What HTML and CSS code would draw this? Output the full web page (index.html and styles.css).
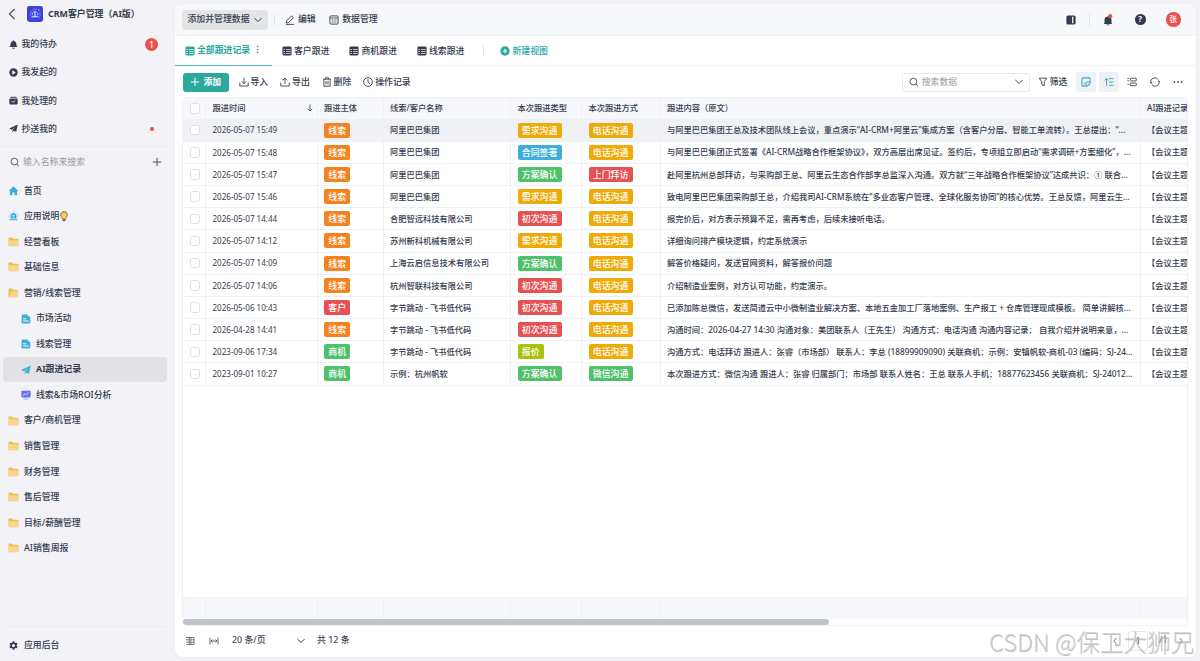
FILE: index.html
```html
<!DOCTYPE html>
<html lang="zh-CN">
<head>
    <meta charset="UTF-8">
    <meta name="viewport" content="width=device-width, initial-scale=1.0">
    <title>CRM客户管理（AI版）</title>
    <link rel="stylesheet" href="styles.css">
</head>
<body>
    <!-- shared icons -->
    <svg class="sprite">
        <symbol id="folder" viewBox="0 0 12 11"><path d="M.5 1.8Q.5.6 1.7.6H4.3L5.5 1.8H10.2Q11.4 1.8 11.4 3V9Q11.4 10.2 10.2 10.2H1.7Q.5 10.2.5 9Z" fill="#efbd50"/><path d="M.9 3.6H11V9Q11 9.9 10.1 9.9H1.8Q.9 9.9.9 9Z" fill="#f8d689"/></symbol>
        <symbol id="folder-open" viewBox="0 0 12 11"><path d="M.5 1.8Q.5.6 1.7.6H4.3L5.5 1.8H9.6Q10.6 1.8 10.6 3V9.5L1.5 10.2Q.5 10 .5 9Z" fill="#efbd50"/><path d="M3 3.8H11.6L10 9.4Q9.8 10.2 9 10.2H1.3Z" fill="#f8d689"/></symbol>
        <symbol id="doc" viewBox="0 0 10 10"><path d="M.6 1.8Q.6.5 1.8.5H6L9.3 3.6V8.3Q9.3 9.5 8.1 9.5H1.8Q.6 9.5.6 8.3Z" fill="#3dafd4"/><path d="M2.2 4.7H5M2.2 7H7.7" stroke="#fff" stroke-width="1.1"/></symbol>
        <symbol id="plane" viewBox="0 0 10 10"><path d="M9.7.5.2 5 3 6.3 7.5 2.9 3.8 6.7V9.5L5.3 7.5 8 8.7Z" fill="currentColor"/></symbol>
        <symbol id="table" viewBox="0 0 10 10"><rect x=".4" y=".6" width="9.2" height="8.8" rx="1.3" fill="currentColor"/><path d="M1.3 3.5H3M4 3.5H8.7M1.3 5.5H3M4 5.5H8.7M1.3 7.5H3M4 7.5H8.7" stroke="#fff" stroke-width=".75" opacity=".9"/></symbol>
        <symbol id="down" viewBox="0 0 10 6"><path d="M1.4 1 5 4.6 8.6 1" fill="none" stroke="currentColor" stroke-width="1"/></symbol>
        <symbol id="search" viewBox="0 0 10 10"><circle cx="4.4" cy="4.6" r="3.4" fill="none" stroke="currentColor" stroke-width=".9"/><path d="M6.9 7.1 9 9.2" stroke="currentColor" stroke-width=".9"/></symbol>
        <symbol id="plus" viewBox="0 0 10 10"><path d="M5 .8V9.2M.8 5H9.2" stroke="currentColor" stroke-width="1"/></symbol>
    </svg>

    <aside class="sidebar">
        <div class="app-title">
            <svg class="back" viewBox="0 0 8 12"><path d="M6.6 1 1.4 6 6.6 11" fill="none" stroke="#424957" stroke-width="1.1"/></svg>
            <svg class="logo" viewBox="0 0 16 16"><rect width="16" height="16" rx="2.4" fill="#3f41dd"/><path d="M5.2 12A5.2 5.2 0 0 1 10.2 3.2M12.8 6.2A5.2 5.2 0 0 1 11 12.2" fill="none" stroke="#7f8fff" stroke-width=".8"/><path d="M6 9.5A2.6 2.6 0 1 1 10.2 9.5" fill="none" stroke="#a9c8ff" stroke-width=".9"/><path d="M8 6V11M5.2 10.8H11" stroke="#d5f3ff" stroke-width="1.1"/><circle cx="11.8" cy="4" r=".8" fill="#c3b5ff"/></svg>
            <h1>CRM客户管理（AI版）</h1>
        </div>
        <nav class="tasks">
            <a class="task"><svg class="task-icon" viewBox="0 0 10 10"><path d="M5 .2Q5.7.2 5.7 1 8.3 1.8 8.3 4.5V6.2L9.6 7.9H.4L1.7 6.2V4.5Q1.7 1.8 4.3 1 4.3.2 5 .2ZM3.5 8.5H6.5Q6 9.8 5 9.8T3.5 8.5Z" fill="currentColor"/></svg>我的待办<span class="badge">1</span></a>
            <a class="task"><svg class="task-icon" viewBox="0 0 10 10"><circle cx="5" cy="5" r="4.7" fill="currentColor"/><path d="M3.7 2.6 7.4 5 3.7 7.4Z" fill="#fff"/></svg>我发起的</a>
            <a class="task"><svg class="task-icon" viewBox="0 0 10 10"><path d="M1.6.8H8.4V2H1.6ZM1 2.7H9Q9.6 2.7 9.6 3.4V8.4Q9.6 9.4 8.6 9.4H1.4Q.4 9.4.4 8.4V3.4Q.4 2.7 1 2.7Z" fill="currentColor"/><path d="M3.1 5.6 4.6 7.1 7 4.7" fill="none" stroke="#fff" stroke-width=".9"/></svg>我处理的</a>
            <a class="task"><svg class="task-icon"><use href="#plane"/></svg>抄送我的<span class="dot"></span></a>
        </nav>
        <div class="side-search">
            <svg class="icon"><use href="#search"/></svg>
            <span>输入名称来搜索</span>
            <svg class="icon"><use href="#plus"/></svg>
        </div>
        <nav class="menu">
            <a class="item"><svg viewBox="0 0 12 11"><path d="M6 .6 11.2 5.1H9.9V10.2H7.2V7.2H4.8V10.2H2.1V5.1H.8Z" fill="#3dafd4"/></svg>首页</a>
            <a class="item"><svg viewBox="0 0 12 11"><path d="M2.8 8.3V5Q2.8 2.2 6 2.2T9.2 5V8.3ZM1.5 9H10.5V10.3H1.5Z" fill="#3dafd4"/><path d="M6 .2V1.3M1.5 2 2.5 2.9M10.5 2 9.5 2.9M.5 5.5H1.8M10.2 5.5H11.5" stroke="#3dafd4" stroke-width=".7"/><path d="M6 4.3V7M5 5.2H7" stroke="#fff" stroke-width=".8"/></svg>应用说明<svg class="bulb" viewBox="0 0 8 11"><path d="M4 .5A3.4 3.4 0 0 1 6 6.6L5.5 8H2.5L2 6.6A3.4 3.4 0 0 1 4 .5Z" fill="#ffc545" stroke="#6b4a32" stroke-width=".7"/><path d="M2.5 8.3H5.5V9.6L4 10.6 2.5 9.6Z" fill="#555b66"/><path d="M3.3 4.5V7.5M4.7 4.5V7.5" stroke="#fff1a8" stroke-width=".6"/></svg></a>
            <a class="item"><svg><use href="#folder"/></svg>经营看板</a>
            <a class="item"><svg><use href="#folder"/></svg>基础信息</a>
            <a class="item"><svg><use href="#folder-open"/></svg>营销/线索管理</a>
            <a class="item sub"><svg><use href="#doc"/></svg>市场活动</a>
            <a class="item sub"><svg><use href="#doc"/></svg>线索管理</a>
            <a class="item sub active"><svg><use href="#plane"/></svg>AI跟进记录</a>
            <a class="item sub"><svg viewBox="0 0 10 10"><rect x=".4" y=".7" width="9.2" height="6.7" rx=".8" fill="#6673ea"/><path d="M2.2 5.4 4.2 3.7 5.4 4.7 7.6 2.5" fill="none" stroke="#fff" stroke-width=".8"/><path d="M5 7.4V9M2.5 9.1H7.5" stroke="#78c8e8" stroke-width=".9"/></svg>线索&amp;市场ROI分析</a>
            <a class="item"><svg><use href="#folder"/></svg>客户/商机管理</a>
            <a class="item"><svg><use href="#folder"/></svg>销售管理</a>
            <a class="item"><svg><use href="#folder"/></svg>财务管理</a>
            <a class="item"><svg><use href="#folder"/></svg>售后管理</a>
            <a class="item"><svg><use href="#folder"/></svg>目标/薪酬管理</a>
            <a class="item"><svg><use href="#folder"/></svg>AI销售周报</a>
        </nav>
        <a class="backend"><svg viewBox="0 0 10 10"><path d="M4.1.4H5.9L6.2 1.7 7.3 2.3 8.6 1.9 9.5 3.5 8.5 4.4V5.6L9.5 6.5 8.6 8.1 7.3 7.7 6.2 8.3 5.9 9.6H4.1L3.8 8.3 2.7 7.7 1.4 8.1.5 6.5 1.5 5.6V4.4L.5 3.5 1.4 1.9 2.7 2.3 3.8 1.7ZM5 3.3A1.7 1.7 0 1 0 5 6.7 1.7 1.7 0 1 0 5 3.3Z" fill="currentColor" fill-rule="evenodd"/></svg>应用后台</a>
    </aside>

    <main class="panel">
        <header class="topbar">
            <button class="mode">添加并管理数据<svg class="chev"><use href="#down"/></svg></button>
            <span class="sep"></span>
            <a class="top-link edit"><svg class="icon" viewBox="0 0 10 10"><path d="M1.2 8 1.7 5.8 6.5.9 8.4 2.7 3.6 7.6ZM1 9.4H9" fill="none" stroke="currentColor" stroke-width=".9"/></svg>编辑</a>
            <a class="top-link"><svg class="icon" viewBox="0 0 10 10"><rect x=".9" y=".9" width="8.2" height="8.2" rx="1" fill="none" stroke="currentColor" stroke-width=".9"/><path d="M1 3H9M2.7 5H4M4.5 5H5.7M6.2 5H7.5M2.7 7H4M4.5 7H5.7M6.2 7H7.5" stroke="currentColor" stroke-width=".8"/></svg>数据管理</a>
            <div class="top-right">
                <svg class="icon" viewBox="0 0 10 10"><rect x=".4" y=".5" width="9.2" height="9" rx="1.5" fill="#343b4b"/><path d="M6.7 1.8V8.2" stroke="#f7f8fa" stroke-width="1.3"/></svg>
                <span class="sep"></span>
                <svg class="bell" viewBox="0 0 10 12"><path d="M1.5 9V6Q1.5 2.6 5 2.4 8.5 2.6 8.5 6V9L9.2 10H.8ZM3.5 10.5H6.5V11.3H3.5Z" fill="#343b4b"/><circle cx="7.2" cy="2.2" r="2.1" fill="#ea4b4b"/></svg>
                <span class="help">?</span>
                <span class="avatar">张</span>
            </div>
        </header>

        <div class="tabs">
            <a class="tab current"><svg class="icon"><use href="#table"/></svg>全部跟进记录<i class="more">⋮</i></a>
            <a class="tab"><svg class="icon"><use href="#table"/></svg>客户跟进</a>
            <a class="tab"><svg class="icon"><use href="#table"/></svg>商机跟进</a>
            <a class="tab"><svg class="icon"><use href="#table"/></svg>线索跟进</a>
            <span class="sep"></span>
            <a class="new-view"><svg class="icon" viewBox="0 0 10 10"><circle cx="5" cy="5" r="4.7" fill="#2ba99d"/><path d="M5 2.8V7.2M2.8 5H7.2" stroke="#fff"/></svg>新建视图</a>
        </div>

        <div class="toolbar">
            <button class="add"><svg class="icon"><use href="#plus"/></svg>添加</button>
            <a class="tool"><svg class="icon" viewBox="0 0 10 10"><path d="M5 .8V6.5M2.7 4.4 5 6.7 7.3 4.4M.8 5.6V9H9.2V5.6" fill="none" stroke="currentColor" stroke-width=".9"/></svg>导入</a>
            <a class="tool"><svg class="icon" viewBox="0 0 10 10"><path d="M5 7V1.2M2.7 3.4 5 1.1 7.3 3.4M.8 5.6V9H9.2V5.6" fill="none" stroke="currentColor" stroke-width=".9"/></svg>导出</a>
            <a class="tool"><svg class="icon" viewBox="0 0 10 10"><path d="M1 2.2H9M3.5 2V.8H6.5V2M1.9 2.2V9.2H8.1V2.2M4 4V7.4M6 4V7.4" fill="none" stroke="currentColor" stroke-width=".9"/></svg>删除</a>
            <a class="tool"><svg class="icon" viewBox="0 0 10 10"><circle cx="5" cy="5" r="4.4" fill="none" stroke="currentColor" stroke-width=".9"/><path d="M5 2.3V5.3L7 6.6" fill="none" stroke="currentColor" stroke-width=".9"/></svg>操作记录</a>
            <div class="search-box"><svg class="icon"><use href="#search"/></svg><span>搜索数据</span><svg class="chev"><use href="#down"/></svg></div>
            <a class="filter"><svg class="icon" viewBox="0 0 10 10"><path d="M1.2 1.2H8.8L6.2 4.8V8.8L3.8 7.7V4.8Z" fill="none" stroke="currentColor" stroke-width=".9"/></svg>筛选</a>
            <a class="square on"><svg class="icon" viewBox="0 0 10 10"><path d="M9.1 5V1.9Q9.1.9 8.1.9H1.9Q.9.9.9 1.9V8.1Q.9 9.1 1.9 9.1H5Q8.8 8.8 9.1 5H6Q5 5 5 6V9M2.8 6.4H3.8" fill="none" stroke="currentColor" stroke-width="1.1"/></svg></a>
            <a class="square on"><svg class="icon" viewBox="0 0 10 10"><path d="M2.5 9V1.7M.6 3.5 2.5 1.5 4.4 3.5M4.8 1.7H9.5M5 5H9.5M5 8.4H9.5" fill="none" stroke="currentColor" stroke-width="1"/></svg></a>
            <a class="square"><svg class="icon" viewBox="0 0 10 10"><path d="M.5 1.5H1.8M.5 3.8H1.8M.5 7.3H1.8" stroke="currentColor"/><rect x="3.3" y="1.2" width="6" height="2.7" rx=".4" fill="none" stroke="currentColor" stroke-width=".9"/><rect x="3.3" y="6" width="6" height="2.7" rx=".4" fill="none" stroke="currentColor" stroke-width=".9"/></svg></a>
            <a class="square"><svg class="icon" viewBox="0 0 10 10"><path d="M1 5.8A4 4 0 0 1 8.4 2.9M9 4.2A4 4 0 0 1 1.6 7.1M.2 5 1 6.2 2.2 5.5M9.8 5 9 3.8 7.8 4.5" fill="none" stroke="currentColor" stroke-width=".9"/></svg></a>
            <a class="square last"><svg class="icon" viewBox="0 0 10 10"><circle cx="1.5" cy="5" r=".8"/><circle cx="5" cy="5" r=".8"/><circle cx="8.5" cy="5" r=".8"/></svg></a>
        </div>

        <section class="grid">
            <div class="row head"><div><i class="check"></i></div><div>跟进时间<svg class="sort" viewBox="0 0 6 8"><path d="M3 .5V7M.8 4.8 3 7 5.2 4.8" fill="none" stroke="currentColor" stroke-width=".8"/></svg></div><div>跟进主体</div><div>线索/客户名称</div><div>本次跟进类型</div><div>本次跟进方式</div><div>跟进内容（原文）</div><div>AI跟进记录</div></div>
            <div class="row hover"><div><i class="check"></i></div><div class="date">2026-05-07 15:49</div><div><b class="tag orange">线索</b></div><div>阿里巴巴集团</div><div><b class="tag yellow">需求沟通</b></div><div><b class="tag yellow">电话沟通</b></div><div><p>与阿里巴巴集团王总及技术团队线上会议，重点演示“AI-CRM+阿里云”集成方案（含客户分层、智能工单流转）。王总提出：“...</p></div><div>【会议主题</div></div>
            <div class="row"><div><i class="check"></i></div><div class="date">2026-05-07 15:48</div><div><b class="tag orange">线索</b></div><div>阿里巴巴集团</div><div><b class="tag blue">合同签署</b></div><div><b class="tag yellow">电话沟通</b></div><div><p>与阿里巴巴集团正式签署《AI-CRM战略合作框架协议》，双方高层出席见证。签约后，专项组立即启动“需求调研+方案细化”，...</p></div><div>【会议主题</div></div>
            <div class="row"><div><i class="check"></i></div><div class="date">2026-05-07 15:47</div><div><b class="tag orange">线索</b></div><div>阿里巴巴集团</div><div><b class="tag green">方案确认</b></div><div><b class="tag red">上门拜访</b></div><div><p>赴阿里杭州总部拜访，与采购部王总、阿里云生态合作部李总监深入沟通。双方就“三年战略合作框架协议”达成共识：① 联合...</p></div><div>【会议主题</div></div>
            <div class="row"><div><i class="check"></i></div><div class="date">2026-05-07 15:46</div><div><b class="tag orange">线索</b></div><div>阿里巴巴集团</div><div><b class="tag yellow">需求沟通</b></div><div><b class="tag yellow">电话沟通</b></div><div><p>致电阿里巴巴集团采购部王总，介绍我司AI-CRM系统在“多业态客户管理、全球化服务协同”的核心优势。王总反馈，阿里云生...</p></div><div>【会议主题</div></div>
            <div class="row"><div><i class="check"></i></div><div class="date">2026-05-07 14:44</div><div><b class="tag orange">线索</b></div><div>合肥智远科技有限公司</div><div><b class="tag red">初次沟通</b></div><div><b class="tag yellow">电话沟通</b></div><div><p>报完价后，对方表示预算不足，需再考虑，后续未接听电话。</p></div><div>【会议主题</div></div>
            <div class="row"><div><i class="check"></i></div><div class="date">2026-05-07 14:12</div><div><b class="tag orange">线索</b></div><div>苏州新科机械有限公司</div><div><b class="tag yellow">需求沟通</b></div><div><b class="tag yellow">电话沟通</b></div><div><p>详细询问排产模块逻辑，约定系统演示</p></div><div>【会议主题</div></div>
            <div class="row"><div><i class="check"></i></div><div class="date">2026-05-07 14:09</div><div><b class="tag orange">线索</b></div><div>上海云启信息技术有限公司</div><div><b class="tag green">方案确认</b></div><div><b class="tag yellow">电话沟通</b></div><div><p>解答价格疑问，发送官网资料，解答报价问题</p></div><div>【会议主题</div></div>
            <div class="row"><div><i class="check"></i></div><div class="date">2026-05-07 14:06</div><div><b class="tag orange">线索</b></div><div>杭州智联科技有限公司</div><div><b class="tag red">初次沟通</b></div><div><b class="tag yellow">电话沟通</b></div><div><p>介绍制造业案例，对方认可功能，约定演示。</p></div><div>【会议主题</div></div>
            <div class="row"><div><i class="check"></i></div><div class="date">2026-05-06 10:43</div><div><b class="tag red">客户</b></div><div>字节跳动 - 飞书低代码</div><div><b class="tag red">初次沟通</b></div><div><b class="tag yellow">电话沟通</b></div><div><p>已添加陈总微信，发送简道云中小微制造业解决方案、本地五金加工厂落地案例、生产报工 + 仓库管理现成模板。 简单讲解核...</p></div><div>【会议主题</div></div>
            <div class="row"><div><i class="check"></i></div><div class="date">2026-04-28 14:41</div><div><b class="tag orange">线索</b></div><div>字节跳动 - 飞书低代码</div><div><b class="tag red">初次沟通</b></div><div><b class="tag yellow">电话沟通</b></div><div><p>沟通时间：2026-04-27 14:30 沟通对象：美团联系人（王先生） 沟通方式：电话沟通 沟通内容记录： 自我介绍并说明来意，...</p></div><div>【会议主题</div></div>
            <div class="row"><div><i class="check"></i></div><div class="date">2023-09-06 17:34</div><div><b class="tag green">商机</b></div><div>字节跳动 - 飞书低代码</div><div><b class="tag lime">报价</b></div><div><b class="tag yellow">电话沟通</b></div><div><p>沟通方式：电话拜访 跟进人：张睿（市场部） 联系人：李总 (18899909090) 关联商机：示例：安镇帆软-商机-03 (编码：SJ-24...</p></div><div>【会议主题</div></div>
            <div class="row"><div><i class="check"></i></div><div class="date">2023-09-01 10:27</div><div><b class="tag green">商机</b></div><div>示例：杭州帆软</div><div><b class="tag green">方案确认</b></div><div><b class="tag green">微信沟通</b></div><div><p>本次跟进方式：微信沟通 跟进人：张睿 归属部门：市场部 联系人姓名：王总 联系人手机：18877623456 关联商机：SJ-24012...</p></div><div>【会议主题</div></div>
            <div class="row foot"><div></div><div></div><div></div><div></div><div></div><div></div><div></div><div></div></div>
            <div class="scroll"><div class="thumb"></div></div>
        </section>

        <footer class="pager">
            <svg class="icon" viewBox="0 0 10 10"><path d="M1 1.5H9V8.5H1M5.8 1.5V8.5M1 3.8H4.3M1 6.2H4.3M5.8 3.8H9M5.8 6.2H9M4.3 1.5V8.5" fill="none" stroke="currentColor" stroke-width=".7"/></svg>
            <svg class="icon fit" viewBox="0 0 10 10"><path d="M1 1.5V8.5M9 1.5V8.5M2 5H8M3.5 3.5 2 5 3.5 6.5M6.5 3.5 8 5 6.5 6.5" fill="none" stroke="currentColor" stroke-width=".8"/></svg>
            <span class="size">20 条/页</span>
            <svg class="chev"><use href="#down"/></svg>
            <span>共 12 条</span>
            <div class="pages"><svg class="arrow" viewBox="0 0 4 8"><path d="M3.4 1 .8 4 3.4 7" fill="none" stroke="currentColor" stroke-width=".9"/></svg><span class="page">1</span><span>/1</span><svg class="arrow" viewBox="0 0 4 8"><path d="M.6 1 3.2 4 .6 7" fill="none" stroke="currentColor" stroke-width=".9"/></svg></div>
        </footer>
    </main>
    <div class="watermark">CSDN @保卫大狮兄</div>
</body>
</html>
```
FILE: styles.css
```css
* {
    box-sizing: border-box;
}

body {
    margin: 0;
    width: 1200px;
    height: 661px;
    overflow: hidden;
    display: flex;
    background: #f2f2f7;
    color: #343c4d;
    font-family: "Noto Sans", "Noto Sans CJK SC", sans-serif;
    font-size: 8.9px;
    font-weight: 500;
    line-height: 1.4;
    white-space: nowrap;
}

.sprite {
    position: absolute;
    width: 0;
    height: 0;
}

svg {
    flex: none;
}

button {
    border: none;
    font: inherit;
    color: inherit;
    padding: 0;
}

.icon {
    width: 10px;
    height: 10px;
}

.chev {
    width: 10px;
    height: 6px;
}

.sep {
    width: 1px;
    height: 12px;
    background: #e3e5e9;
}

/* sidebar */
.sidebar {
    width: 175px;
    flex: none;
    display: flex;
    flex-direction: column;
}

.app-title {
    display: flex;
    align-items: center;
    height: 28px;
    padding-left: 8px;
}

.back {
    width: 8px;
    height: 12px;
}

.logo {
    width: 16px;
    height: 16px;
    margin: 0 5px 0 11px;
}

.app-title h1 {
    margin: 0;
    padding-top: 1px;
    font-size: 8.9px;
    font-weight: 700;
}

.tasks {
    height: 119px;
    padding-top: 2.5px;
    margin-right: 7px;
    border-bottom: 1px solid #ebebf0;
}

.task {
    display: flex;
    align-items: center;
    height: 28.1px;
    padding: 0 10px 0 9px;
    gap: 3.5px;
}

.task-icon {
    width: 9px;
    height: 9px;
}

.badge {
    width: 13px;
    height: 13px;
    margin-left: auto;
    border-radius: 50%;
    background: #e9504e;
    color: #fff;
    font-size: 8px;
    line-height: 13px;
    text-align: center;
}

.dot {
    width: 4px;
    height: 4px;
    margin: 0 4.5px 0 auto;
    border-radius: 50%;
    background: #ea4b4b;
}

.side-search {
    display: flex;
    align-items: center;
    height: 30px;
    padding: 0 13px 0 10px;
    gap: 3px;
    color: #4a5261;
}

.side-search span {
    flex: 1;
    color: #969ba5;
    font-weight: 400;
}

.menu {
    flex: 1;
    padding-top: 1px;
}

.item {
    display: flex;
    align-items: center;
    height: 25.55px;
    margin: 0 8px 0 3px;
    padding-left: 5px;
    gap: 5px;
    border-radius: 4px;
}

.item svg {
    width: 11px;
    height: 10px;
}

.item .bulb {
    width: 8px;
    height: 11px;
    margin-left: -5px;
}

.item.sub {
    padding-left: 18px;
}

.item.sub svg {
    width: 10px;
    color: #3dafd4;
}

.item.active {
    background: #e2e2e6;
    font-weight: 700;
}

.backend {
    display: flex;
    align-items: center;
    height: 35px;
    margin: 0 8px 0 3px;
    padding: 2px 0 0 6px;
    gap: 6px;
    border-top: 1px solid #ebebf0;
}

.backend svg {
    width: 9px;
    height: 9px;
}

/* main panel */
.panel {
    width: 1020.5px;
    height: 653px;
    margin-top: 4px;
    display: flex;
    flex-direction: column;
    background: #fff;
    border-radius: 7px;
    overflow: hidden;
    box-shadow: 0 0 2px #e4e5eb;
}

.topbar {
    display: flex;
    align-items: center;
    height: 32px;
    padding: 0 15px 0 7px;
    background: #f7f8fa;
    border-bottom: 1px solid #f0f1f4;
}

.mode {
    display: flex;
    align-items: center;
    width: 86px;
    height: 20px;
    padding-left: 5.5px;
    gap: 3px;
    border-radius: 4px;
    background: #e3e4e6;
}

.topbar > .sep {
    margin: 0 10px 0 6px;
}

.top-link {
    display: flex;
    align-items: center;
    gap: 3px;
}

.edit {
    margin-right: 13.5px;
}

.top-right {
    display: flex;
    align-items: center;
    margin-left: auto;
}

.top-right .sep {
    margin: 0 13.5px 0 13px;
}

.bell {
    width: 10px;
    height: 12px;
}

.help, .avatar {
    border-radius: 50%;
    color: #fff;
    text-align: center;
}

.help {
    width: 10.5px;
    height: 10.5px;
    margin: 0 20.5px 0 22px;
    background: #343b4b;
    font-size: 8px;
    font-weight: 700;
    line-height: 10.5px;
}

.avatar {
    width: 14.5px;
    height: 14.5px;
    background: #ea504e;
    font-size: 7.5px;
    line-height: 14px;
}

.tabs {
    display: flex;
    align-items: center;
    height: 30px;
    border-bottom: 1px solid #f0f1f4;
}

.tab {
    display: flex;
    align-items: center;
    gap: 2.5px;
    height: 30px;
    padding-top: 1px;
    margin-right: 19.5px;
}

.tab.current {
    width: 97px;
    margin-right: 9.5px;
    padding-left: 9.5px;
    border-bottom: 1px solid #4cb9bd;
    color: #2ba99d;
    font-weight: 700;
}

.more {
    color: #626975;
    font-style: normal;
    font-size: 9px;
}

.tabs .sep {
    margin: 0 15.5px 0 -1px;
}

.new-view {
    display: flex;
    align-items: center;
    padding-top: 1px;
    gap: 3px;
    color: #2ba6ae;
}

.toolbar {
    display: flex;
    align-items: center;
    height: 31px;
    padding: 1px 8px 0 7.5px;
    color: #3e4655;
}

.add {
    display: flex;
    align-items: center;
    justify-content: center;
    width: 46.5px;
    height: 19px;
    gap: 3px;
    margin-right: 9.5px;
    border-radius: 3px;
    background: #2ba99d;
    color: #fff;
    font-weight: 700;
}

.tool, .filter {
    display: flex;
    align-items: center;
    gap: 2px;
    color: #343c4d;
    margin-right: 11.8px;
}

.search-box {
    display: flex;
    align-items: center;
    width: 128px;
    height: 19px;
    margin: 0 8px 0 auto;
    padding: 0 5px 0 6px;
    gap: 3px;
    border: 1px solid #e8e9ed;
    border-radius: 3px;
}

.search-box span {
    flex: 1;
    color: #969ba5;
    font-weight: 400;
}

.filter {
    margin-right: 8px;
}

.square {
    display: flex;
    align-items: center;
    justify-content: center;
    width: 20px;
    height: 20px;
    margin-right: 3px;
    border-radius: 3px;
}

.square.on {
    background: #eff1f5;
    color: #35aeb9;
}

.square.last {
    margin-right: 0;
}

/* records */
.grid {
    display: flex;
    flex-direction: column;
    width: 1005.5px;
    height: 529px;
    margin-left: 7px;
    border: 1px solid #eef0f3;
    border-radius: 4px;
    overflow: hidden;
    font-size: 8.25px;
}

.row {
    display: grid;
    grid-template-columns: 23px 111.5px 66px 127.5px 71px 78.5px 480px 90px;
    flex: none;
    height: 22.18px;
    border-bottom: 1px solid #eef0f3;
}

.row > div {
    display: flex;
    align-items: center;
    padding-left: 6.5px;
    border-right: 1px solid #eef0f3;
    overflow: hidden;
}

.row.head {
    height: 21.5px;
    background: #f6f7fa;
}

.row.hover {
    background: #f0f1f5;
}

.row .date {
    font-size: 8.05px;
    font-weight: 400;
}

.row p {
    margin: 0;
}

.check {
    width: 10.5px;
    height: 10.5px;
    border: 1px solid #dcdfe5;
    border-radius: 2.5px;
    background: #fff;
}

.sort {
    width: 6px;
    height: 8px;
    margin: 0 4px 0 auto;
}

.tag {
    padding: 0 4.3px;
    border-radius: 2px;
    color: #fff;
    font-size: 8.9px;
    font-weight: 500;
    line-height: 15px;
}

.orange { background: #f58220; }
.yellow { background: #edaa09; }
.red { background: #e65154; }
.green { background: #50c16b; }
.blue { background: #3eafdc; }
.lime { background: #a9c20d; }

.row.foot {
    height: 22px;
    margin-top: auto;
    background: #f6f7fa;
    border-top: 1px solid #eef0f3;
    border-bottom: none;
}

.scroll {
    flex: none;
    height: 6px;
}

.thumb {
    width: 646px;
    height: 6px;
    border-radius: 3px;
    background: #c1c4ca;
}

.pager {
    display: flex;
    align-items: center;
    height: 29px;
    padding: 0 13px 0 10px;
    color: #3e4655;
}

.fit {
    margin: 0 13.5px;
}

.size {
    width: 64px;
}

.pager .chev {
    margin-right: 11px;
}

.pages {
    display: flex;
    align-items: center;
    margin-left: auto;
    gap: 11px;
    color: #5c6473;
}

.arrow {
    width: 4px;
    height: 8px;
}

.page {
    width: 20px;
    height: 20px;
    border: 1px solid #e5e6ea;
    border-radius: 3px;
    line-height: 18px;
    text-align: center;
}

.watermark {
    position: absolute;
    left: 989px;
    top: 624px;
    color: rgba(205, 205, 208, .8);
    font-family: "Noto Sans CJK SC", sans-serif;
    font-size: 23.6px;
    font-weight: 300;
    line-height: 34px;
    text-shadow: .5px .5px 0 rgba(130, 130, 134, .5);
}
```
